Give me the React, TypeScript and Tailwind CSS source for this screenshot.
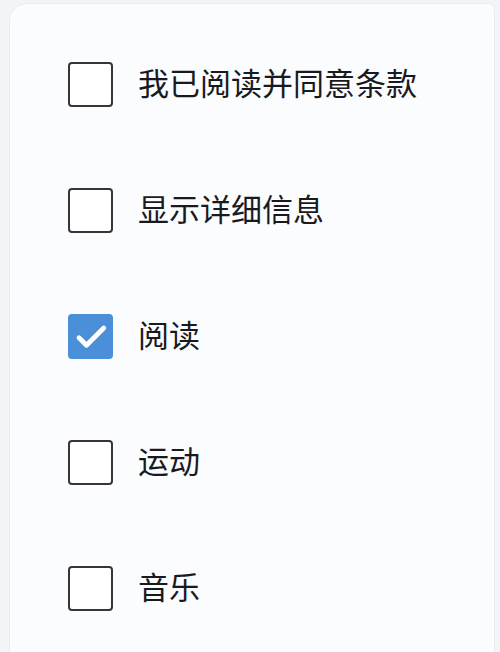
import { useState } from 'react';

type Item = { label: string; checked: boolean };

const INITIAL: Item[] = [
  { label: '我已阅读并同意条款', checked: false },
  { label: '显示详细信息', checked: false },
  { label: '阅读', checked: true },
  { label: '运动', checked: false },
  { label: '音乐', checked: false },
];

export default function App() {
  const [items, setItems] = useState(INITIAL);

  const toggle = (i: number) =>
    setItems((prev) => prev.map((it, idx) => (idx === i ? { ...it, checked: !it.checked } : it)));

  return (
    <div className="h-[652px] w-[500px] overflow-hidden bg-[#f2f4f8] pl-[9px] pr-[5px] pt-[3px] font-['Noto_Sans_CJK_SC',sans-serif]">
      <div className="h-[700px] rounded-tl-[18px] rounded-tr-[6px] border border-[#e9ecf1] bg-[#fbfcfe] pl-[58px] pt-[58px]">
        <div className="flex flex-col gap-[81px]">
          {items.map((it, i) => (
            <label key={it.label} className="flex cursor-pointer items-center gap-[25px]" onClick={() => toggle(i)}>
              {it.checked ? (
                <span className="flex h-[45px] w-[45px] items-center justify-center rounded-[4px] bg-[#4a8fd8]">
                  <svg width="36" height="36" viewBox="0 0 24 24" fill="none">
                    <path d="M4 12.5l5 5L20.5 6" stroke="white" strokeWidth="3.2" strokeLinecap="round" strokeLinejoin="round" />
                  </svg>
                </span>
              ) : (
                <span className="h-[45px] w-[45px] rounded-[4px] border-2 border-[#35353a] bg-white" />
              )}
              <span className="pb-[6px] text-[31px] leading-none text-[#1a1a1e]">{it.label}</span>
            </label>
          ))}
        </div>
      </div>
    </div>
  );
}
